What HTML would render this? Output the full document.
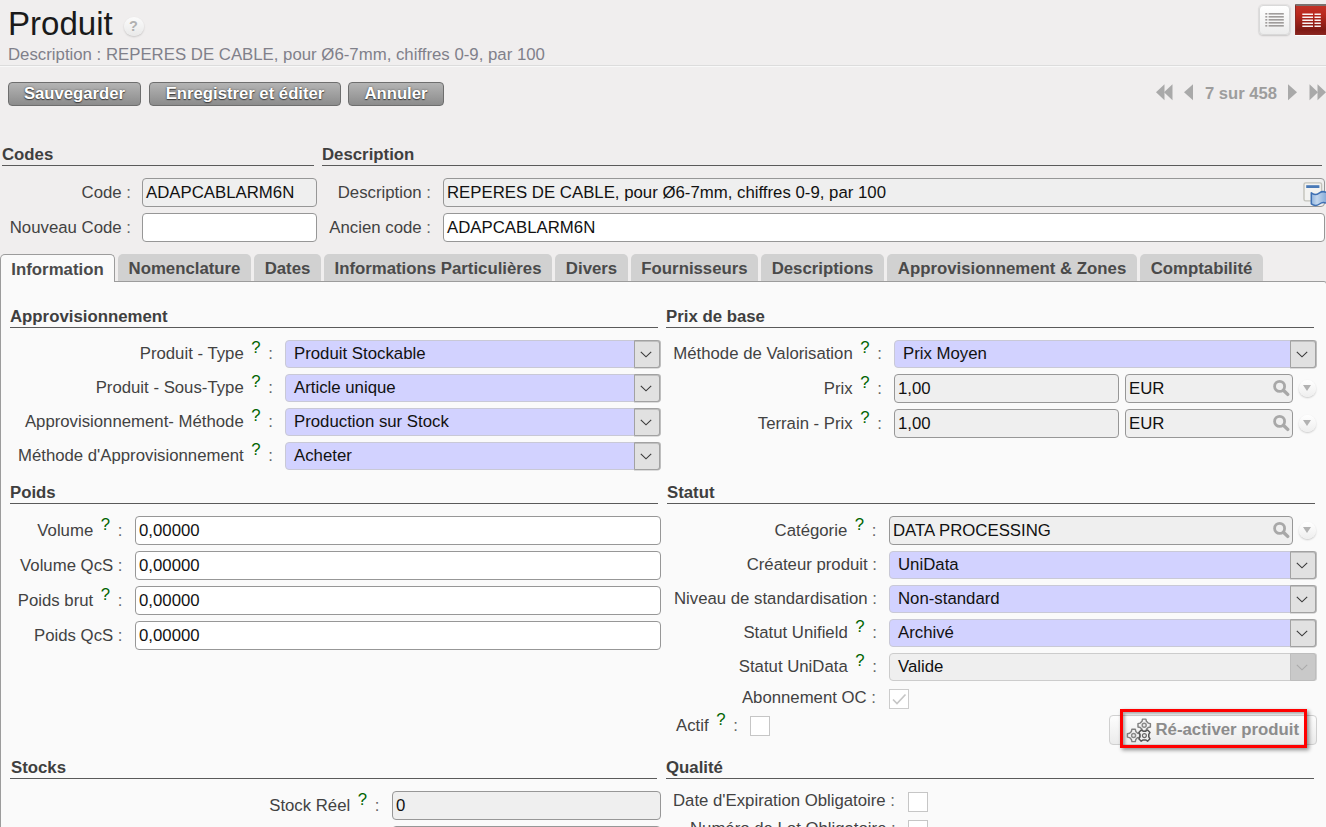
<!DOCTYPE html>
<html lang="fr">
<head>
<meta charset="utf-8">
<title>Produit</title>
<style>
html,body{margin:0;padding:0;}
body{width:1326px;height:827px;overflow:hidden;position:relative;background:#f0eeee;font-family:"Liberation Sans",sans-serif;font-size:16.8px;color:#424242;}
.a{position:absolute;white-space:nowrap;line-height:20px;}
.r{text-align:right;}
.l{font-size:16.75px;}
.c{color:#666;}
h1{position:absolute;margin:0;left:8px;top:4px;font-size:33.1px;font-weight:normal;color:#1a1a1a;line-height:40px;}
.sub{left:8px;top:45px;color:#80808a;font-size:16.8px;}
.hr{position:absolute;height:1px;background:#5a5a5a;}
.btn{position:absolute;top:82px;height:22px;border:1px solid #6e6e6e;border-radius:4px;background:linear-gradient(#b4b4b4,#8c8c8c);color:#fff;font-weight:bold;font-size:16.7px;line-height:22px;text-align:center;text-shadow:0 1px 1px #3a3a3a, 0 0 2px #555;}
.gt{font-weight:bold;color:#3f3f3f;}
.in{position:absolute;box-sizing:border-box;height:29px;border:1px solid #979797;border-radius:4px;background:#fff;color:#111;font-size:16.8px;line-height:27px;padding-left:3px;white-space:nowrap;overflow:hidden;}
.ro{background:#efefef;}
.sel{position:absolute;box-sizing:border-box;height:28px;border:1px solid #c9c9d6;border-radius:4px;background:#d2d2ff;color:#111;font-size:16.8px;line-height:26px;padding-left:8px;white-space:nowrap;overflow:hidden;}
.sel{overflow:visible;}
.sel i{position:absolute;right:-1px;top:-1px;bottom:-1px;width:26px;box-sizing:border-box;border:1px solid #a2a2a2;border-radius:0 3px 3px 0;background:#e1e1e1;box-shadow:1px 0 0 rgba(130,130,130,.5),inset 0 1px 0 rgba(150,150,150,.45),0 1px 0 rgba(150,150,150,.3);}
.sel i svg{position:absolute;left:5.3px;top:9.6px;}
.sel.dis{background:#efefef;border-color:#ccc;}
.sel.dis i{background:#c9c9c9;border-color:#bdbdbd;box-shadow:1px 0 0 rgba(170,170,170,.5);}
.tab{position:absolute;top:254px;height:27px;box-sizing:border-box;background:#d1d1d1;border-radius:5px 5px 0 0;font-weight:bold;color:#4a4a4a;font-size:16.8px;line-height:29px;text-align:center;white-space:nowrap;}
.tab.act{background:#fafafa;border:1px solid #9c9c9c;border-bottom:none;height:28px;line-height:29px;}
.q{color:#006400;position:relative;top:-6px;margin:0 3px 0 3px;}
.cb{position:absolute;box-sizing:border-box;width:20px;height:20px;background:#fff;border:1px solid #c6c6c6;}
.mag{position:absolute;width:18px;height:18px;}
.dd{position:absolute;width:17px;height:17px;margin:-.5px 0 0 -.5px;border-radius:50%;background:linear-gradient(#ffffff,#eeeeee);box-shadow:0 1px 2px rgba(0,0,0,.2);}
.dd:after{content:"";position:absolute;left:4px;top:5px;border:4.5px solid transparent;border-top:6px solid #b2b2b2;border-bottom:none;}
</style>
</head>
<body>
<h1>Produit</h1>
<div class="a" style="left:123.5px;top:16.5px;width:20px;height:19px;border-radius:50%;background:linear-gradient(#fbfbfb,#e9e9e9);box-shadow:0 1px 2px rgba(0,0,0,.18);color:#b1b1b1;font-size:14.5px;font-weight:bold;text-align:center;line-height:19px;">?</div>
<div class="a sub">Description : REPERES DE CABLE, pour Ø6-7mm, chiffres 0-9, par 100</div>
<div class="hr" style="left:0;top:65px;width:1326px;background:#dcdcdc;"></div>
<div class="hr" style="left:0;top:66px;width:1326px;background:#f8f8f8;"></div>

<div class="btn" style="left:8px;width:131px;">Sauvegarder</div>
<div class="btn" style="left:149px;width:190px;">Enregistrer et éditer</div>
<div class="btn" style="left:348px;width:94px;">Annuler</div>

<!-- view switch -->
<div class="a" style="left:1259px;top:5px;width:31px;height:30px;border:1px solid #d9d9d9;border-radius:4px;background:linear-gradient(#ffffff,#ececec);box-sizing:border-box;box-shadow:0 0 1px 1px rgba(0,0,0,.05),0 1px 2px rgba(0,0,0,.12);">
<svg width="31" height="30" style="position:absolute;left:-1px;top:-1px"><g fill="#8b8785"><rect x="6.3" y="8.2" width="2" height="1.3"/><rect x="9.6" y="8.2" width="15.2" height="1.3"/><rect x="6.3" y="11.2" width="2" height="1.3"/><rect x="9.6" y="11.2" width="15.2" height="1.3"/><rect x="6.3" y="14.2" width="2" height="1.3"/><rect x="9.6" y="14.2" width="15.2" height="1.3"/><rect x="6.3" y="17.2" width="2" height="1.3"/><rect x="9.6" y="17.2" width="15.2" height="1.3"/><rect x="6.3" y="20.2" width="2" height="1.3"/><rect x="9.6" y="20.2" width="15.2" height="1.3"/></g></svg>
</div>
<div class="a" style="left:1295px;top:4px;width:32px;height:31px;border-radius:1px 0 0 1px;background:linear-gradient(#c23227,#b9281d 30%,#7e1a14 85%,#8a231d);border:1px solid #8a2a24;border-top:2px solid #7a716f;box-sizing:border-box;box-shadow:0 1px 1px #fff;">
<svg width="32" height="31" style="position:absolute;left:-1px;top:-2px"><g fill="#fff" opacity=".95"><rect x="7.3" y="9.5" width="10.7" height="1.5"/><rect x="19.5" y="9.5" width="6.3" height="1.5"/><rect x="7.3" y="12.5" width="10.7" height="1.5"/><rect x="19.5" y="12.5" width="6.3" height="1.5"/><rect x="7.3" y="15.5" width="10.7" height="1.5"/><rect x="19.5" y="15.5" width="6.3" height="1.5"/><rect x="7.3" y="18.5" width="10.7" height="1.5"/><rect x="19.5" y="18.5" width="6.3" height="1.5"/><rect x="7.3" y="21.5" width="10.7" height="1.5"/><rect x="19.5" y="21.5" width="6.3" height="1.5"/></g></svg>
</div>

<!-- pager -->
<svg class="a" style="left:1155px;top:84px" width="171" height="18"><g fill="#a9a9a9"><polygon points="1,8.2 9.5,0.3 9.5,16.2"/><polygon points="9,8.2 17.5,0.3 17.5,16.2"/><polygon points="29,8.2 38,0.3 38,16.2"/><polygon points="133,0.3 142,8.2 133,16.2"/><polygon points="154.5,0.3 163,8.2 154.5,16.2"/><polygon points="162.5,0.3 171,8.2 162.5,16.2"/></g></svg>
<div class="a" style="left:1205px;top:84px;font-weight:bold;color:#9d9d9d;font-size:16.6px;">7 sur 458</div>

<!-- top groups -->
<div class="a gt" style="left:2px;top:145px;">Codes</div>
<div class="hr" style="left:2px;top:165px;width:312px;"></div>
<div class="a gt" style="left:322px;top:145px;">Description</div>
<div class="hr" style="left:322px;top:165px;width:1000px;"></div>

<div class="a r" style="left:0;width:131px;top:183px;">Code <span class="c">:</span></div>
<div class="in ro" style="left:142px;top:178px;width:175px;">ADAPCABLARM6N</div>
<div class="a r" style="left:0;width:131px;top:218px;">Nouveau Code <span class="c">:</span></div>
<div class="in" style="left:142px;top:213px;width:175px;"></div>
<div class="a r" style="left:300px;width:131px;top:183px;">Description <span class="c">:</span></div>
<div class="in ro" style="left:443px;top:178px;width:882px;">REPERES DE CABLE, pour Ø6-7mm, chiffres 0-9, par 100</div>
<svg class="a" style="left:1302px;top:181px" width="26" height="27" viewBox="0 0 26 27"><defs><linearGradient id="fl" x1="0" x2="1" y1="0" y2="0"><stop offset="0" stop-color="#8fb3dd"/><stop offset=".35" stop-color="#c3d7ee"/><stop offset="1" stop-color="#7fa6d6"/></linearGradient></defs><rect x="2" y="1.9" width="17.6" height="18" rx="1.6" fill="#f3f3f1" stroke="#c3c3bc" stroke-width="1.4"/><rect x="4.2" y="4.2" width="13.2" height="2.8" fill="#4a7ab7"/><path d="M9.3 11.8 C12 14.4 15 13.6 17.5 11.8 C20 10.1 22.5 10.2 25.5 12 L25.5 22.8 C22.5 21 20 21.2 17.5 23 C15 24.7 12 25 9.3 22.8 Z" fill="url(#fl)" stroke="#3f70b3" stroke-width="1.5" stroke-linejoin="round"/></svg>
<div class="a r" style="left:300px;width:131px;top:218px;">Ancien code <span class="c">:</span></div>
<div class="in" style="left:443px;top:213px;width:882px;">ADAPCABLARM6N</div>

<!-- tabs -->
<div class="a" style="left:0;top:281px;width:1327px;height:560px;background:#fafafa;border:1px solid #9c9c9c;border-top-right-radius:3px;box-sizing:border-box;"></div>
<div class="tab act" style="left:0;width:115px;">Information</div>
<div class="tab" style="left:118px;width:133px;">Nomenclature</div>
<div class="tab" style="left:254px;width:67px;">Dates</div>
<div class="tab" style="left:324px;width:228px;">Informations Particulières</div>
<div class="tab" style="left:555px;width:73px;">Divers</div>
<div class="tab" style="left:631px;width:127px;">Fournisseurs</div>
<div class="tab" style="left:761px;width:123px;">Descriptions</div>
<div class="tab" style="left:887px;width:250px;">Approvisionnement &amp; Zones</div>
<div class="tab" style="left:1140px;width:123px;">Comptabilité</div>

<!-- notebook content -->
<div class="a gt" style="left:10px;top:307px;">Approvisionnement</div>
<div class="hr" style="left:10px;top:327px;width:648px;"></div>
<div class="a r l" style="left:-127px;width:400px;top:344px;">Produit - Type <span class="q">?</span> <span class="c">:</span></div>
<div class="sel" style="left:285px;top:340px;width:375px;">Produit Stockable<i><svg width="12" height="7" viewBox="0 0 12 7"><path d="M0.8 0.8 L6 5.8 L11.2 0.8" fill="none" stroke="#3a3a3a" stroke-width="1.15"/></svg></i></div>
<div class="a r l" style="left:-127px;width:400px;top:378px;">Produit - Sous-Type <span class="q">?</span> <span class="c">:</span></div>
<div class="sel" style="left:285px;top:374px;width:375px;">Article unique<i><svg width="12" height="7" viewBox="0 0 12 7"><path d="M0.8 0.8 L6 5.8 L11.2 0.8" fill="none" stroke="#3a3a3a" stroke-width="1.15"/></svg></i></div>
<div class="a r l" style="left:-127px;width:400px;top:412px;">Approvisionnement- Méthode <span class="q">?</span> <span class="c">:</span></div>
<div class="sel" style="left:285px;top:408px;width:375px;">Production sur Stock<i><svg width="12" height="7" viewBox="0 0 12 7"><path d="M0.8 0.8 L6 5.8 L11.2 0.8" fill="none" stroke="#3a3a3a" stroke-width="1.15"/></svg></i></div>
<div class="a r l" style="left:-127px;width:400px;top:446px;">Méthode d'Approvisionnement <span class="q">?</span> <span class="c">:</span></div>
<div class="sel" style="left:285px;top:442px;width:375px;">Acheter<i><svg width="12" height="7" viewBox="0 0 12 7"><path d="M0.8 0.8 L6 5.8 L11.2 0.8" fill="none" stroke="#3a3a3a" stroke-width="1.15"/></svg></i></div>
<div class="a gt" style="left:666px;top:307px;">Prix de base</div>
<div class="hr" style="left:666px;top:327px;width:648px;"></div>
<div class="a r l" style="left:482px;width:400px;top:344px;">Méthode de Valorisation <span class="q">?</span> <span class="c">:</span></div>
<div class="sel" style="left:894px;top:340px;width:422px;">Prix Moyen<i><svg width="12" height="7" viewBox="0 0 12 7"><path d="M0.8 0.8 L6 5.8 L11.2 0.8" fill="none" stroke="#3a3a3a" stroke-width="1.15"/></svg></i></div>
<div class="a r l" style="left:482px;width:400px;top:379px;">Prix <span class="q">?</span> <span class="c">:</span></div>
<div class="in ro" style="left:894px;top:374px;width:225px;">1,00</div>
<div class="in ro" style="left:1125px;top:374px;width:168px;">EUR</div>
<svg class="mag" style="left:1272px;top:379px" viewBox="0 0 18 18"><circle cx="7.6" cy="7.4" r="5" fill="none" stroke="#a8a8a8" stroke-width="2.8"/><path d="M11.4 11.2 L15.7 15.4" stroke="#a8a8a8" stroke-width="3.4" stroke-linecap="round"/></svg>
<div class="dd" style="left:1299px;top:380px"></div>
<div class="a r l" style="left:482px;width:400px;top:414px;">Terrain - Prix <span class="q">?</span> <span class="c">:</span></div>
<div class="in ro" style="left:894px;top:409px;width:225px;">1,00</div>
<div class="in ro" style="left:1125px;top:409px;width:168px;">EUR</div>
<svg class="mag" style="left:1272px;top:414px" viewBox="0 0 18 18"><circle cx="7.6" cy="7.4" r="5" fill="none" stroke="#a8a8a8" stroke-width="2.8"/><path d="M11.4 11.2 L15.7 15.4" stroke="#a8a8a8" stroke-width="3.4" stroke-linecap="round"/></svg>
<div class="dd" style="left:1299px;top:415px"></div>
<div class="a gt" style="left:10px;top:483px;">Poids</div>
<div class="hr" style="left:10px;top:503px;width:648px;"></div>
<div class="a r l" style="left:-277.5px;width:400px;top:521px;">Volume <span class="q">?</span> <span class="c">:</span></div>
<div class="in" style="left:135px;top:516px;width:526px;">0,00000</div>
<div class="a r l" style="left:-277.5px;width:400px;top:556px;">Volume QcS <span class="c">:</span></div>
<div class="in" style="left:135px;top:551px;width:526px;">0,00000</div>
<div class="a r l" style="left:-277.5px;width:400px;top:591px;">Poids brut <span class="q">?</span> <span class="c">:</span></div>
<div class="in" style="left:135px;top:586px;width:526px;">0,00000</div>
<div class="a r l" style="left:-277.5px;width:400px;top:626px;">Poids QcS <span class="c">:</span></div>
<div class="in" style="left:135px;top:621px;width:526px;">0,00000</div>
<div class="a gt" style="left:667px;top:483px;">Statut</div>
<div class="hr" style="left:667px;top:503px;width:648px;"></div>
<div class="a r l" style="left:476.5px;width:400px;top:521px;">Catégorie <span class="q">?</span> <span class="c">:</span></div>
<div class="in ro" style="left:889px;top:516px;width:404px;">DATA PROCESSING</div>
<svg class="mag" style="left:1272px;top:521px" viewBox="0 0 18 18"><circle cx="7.6" cy="7.4" r="5" fill="none" stroke="#a8a8a8" stroke-width="2.8"/><path d="M11.4 11.2 L15.7 15.4" stroke="#a8a8a8" stroke-width="3.4" stroke-linecap="round"/></svg>
<div class="dd" style="left:1299px;top:522px"></div>
<div class="a r l" style="left:477px;width:400px;top:555px;">Créateur produit <span class="c">:</span></div>
<div class="sel" style="left:889px;top:551px;width:427px;">UniData<i><svg width="12" height="7" viewBox="0 0 12 7"><path d="M0.8 0.8 L6 5.8 L11.2 0.8" fill="none" stroke="#3a3a3a" stroke-width="1.15"/></svg></i></div>
<div class="a r l" style="left:477px;width:400px;top:589px;">Niveau de standardisation <span class="c">:</span></div>
<div class="sel" style="left:889px;top:585px;width:427px;">Non-standard<i><svg width="12" height="7" viewBox="0 0 12 7"><path d="M0.8 0.8 L6 5.8 L11.2 0.8" fill="none" stroke="#3a3a3a" stroke-width="1.15"/></svg></i></div>
<div class="a r l" style="left:477px;width:400px;top:623px;">Statut Unifield <span class="q">?</span> <span class="c">:</span></div>
<div class="sel" style="left:889px;top:619px;width:427px;">Archivé<i><svg width="12" height="7" viewBox="0 0 12 7"><path d="M0.8 0.8 L6 5.8 L11.2 0.8" fill="none" stroke="#3a3a3a" stroke-width="1.15"/></svg></i></div>
<div class="a r l" style="left:477px;width:400px;top:657px;">Statut UniData <span class="q">?</span> <span class="c">:</span></div>
<div class="sel dis" style="left:889px;top:653px;width:427px;">Valide<i><svg width="12" height="7" viewBox="0 0 12 7"><path d="M0.8 0.8 L6 5.8 L11.2 0.8" fill="none" stroke="#aaa" stroke-width="1.15"/></svg></i></div>
<div class="a r l" style="left:476px;width:400px;top:688px;">Abonnement OC <span class="c">:</span></div>
<div class="cb" style="left:889px;top:689px;border-color:#ccc;"><svg width="18" height="18" viewBox="0 0 18 18"><path d="M3 9.5 L7 13.5 L15.5 4.5" fill="none" stroke="#c6c6c6" stroke-width="1.7"/></svg></div>
<div class="a l" style="left:676px;top:716px;">Actif <span class="q">?</span> <span class="c">:</span></div>
<div class="cb" style="left:750px;top:716px;"></div>
<div class="a" style="left:1109px;top:715px;width:208px;height:30px;box-sizing:border-box;border:1px solid #d0d0d0;border-radius:4px;background:linear-gradient(#fdfdfd,#ebebeb);"></div>
<div class="a" style="left:1120px;top:709px;width:187px;height:39px;box-sizing:border-box;border:3px solid #ff0000;box-shadow:2px 2px 4px rgba(0,0,0,.45),inset 2px 2px 3px rgba(0,0,0,.32);"></div>
<svg class="a" style="left:1126px;top:716px" width="30" height="30" viewBox="0 0 30 30"><g fill="#f2f2f2" stroke="#808080" stroke-width="1.45" stroke-linejoin="round"><g transform="translate(18.2,9.3)"><path d="M-1.7,-6.2 L1.7,-6.2 L2.2,-4 L4,-2.2 L6.2,-1.7 L6.2,1.7 L4,2.2 L2.2,4 L1.7,6.2 L-1.7,6.2 L-2.2,4 L-4,2.2 L-6.2,1.7 L-6.2,-1.7 L-4,-2.2 L-2.2,-4 Z"/><circle r="2" fill="#ececec" stroke="#8a8a8a"/></g><g transform="translate(7.6,19.4)"><path d="M-1.7,-6.2 L1.7,-6.2 L2.2,-4 L4,-2.2 L6.2,-1.7 L6.2,1.7 L4,2.2 L2.2,4 L1.7,6.2 L-1.7,6.2 L-2.2,4 L-4,2.2 L-6.2,1.7 L-6.2,-1.7 L-4,-2.2 L-2.2,-4 Z"/><circle r="2" fill="#ececec" stroke="#8a8a8a"/></g><g transform="translate(18.4,19.6)" stroke="#565656" stroke-width="1.5"><path transform="rotate(45) scale(1.0)" d="M-1.7,-6.2 L1.7,-6.2 L2.2,-4 L4,-2.2 L6.2,-1.7 L6.2,1.7 L4,2.2 L2.2,4 L1.7,6.2 L-1.7,6.2 L-2.2,4 L-4,2.2 L-6.2,1.7 L-6.2,-1.7 L-4,-2.2 L-2.2,-4 Z"/><circle r="2" fill="#ececec" stroke="#6a6a6a" stroke-width="1.2"/></g></g></svg>
<div class="a" style="left:1155.5px;top:720px;font-weight:bold;color:#8c8c8c;">Ré-activer produit</div>
<div class="a gt" style="left:11px;top:758px;">Stocks</div>
<div class="hr" style="left:10px;top:778px;width:647px;"></div>
<div class="a r l" style="left:-20.5px;width:400px;top:796px;">Stock Réel <span class="q">?</span> <span class="c">:</span></div>
<div class="in ro" style="left:392px;top:791px;width:269px;">0</div>
<div class="in ro" style="left:392px;top:826px;width:269px;"></div>
<div class="a gt" style="left:666px;top:758px;">Qualité</div>
<div class="hr" style="left:666px;top:778px;width:648px;"></div>
<div class="a l" style="left:673px;top:791px;">Date d'Expiration Obligatoire <span class="c">:</span></div>
<div class="cb" style="left:908px;top:792px;"></div>
<div class="a l" style="left:690px;top:819px;">Numéro de Lot Obligatoire <span class="c">:</span></div>
<div class="cb" style="left:908px;top:820px;"></div>
</body>
</html>
